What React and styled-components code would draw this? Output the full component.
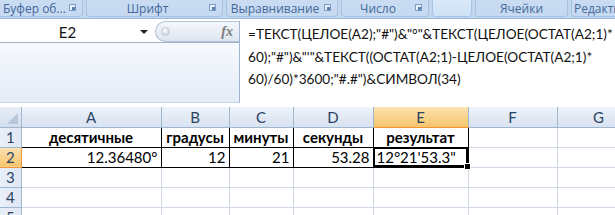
import React from 'react'
import styled, { createGlobalStyle } from 'styled-components'

const GlobalStyle = createGlobalStyle`
    html, body {
        margin: 0;
        padding: 0;
        background: #ffffff;
        overflow: hidden;
    }
    * { box-sizing: border-box; }
`

const Page = styled.div`
    width: 615px;
    height: 215px;
    display: flex;
    flex-direction: column;
    overflow: hidden;
    font-family: Lato, "Open Sans", sans-serif;
`

// ribbon group captions
const Ribbon = styled.div`
    height: 19px;
    display: flex;
    gap: 3px;
    background: #c2d6ee;
    border-bottom: 1px solid #9ab7dc;
    flex-shrink: 0;
    overflow: hidden;
`
const Group = styled.div`
    position: relative;
    width: ${p => p.w}px;
    flex-shrink: 0;
    height: 17px;
    margin-left: ${p => p.ml || 0}px;
    display: flex;
    align-items: center;
    justify-content: ${p => p.pl !== undefined ? 'flex-start' : 'center'};
    padding-left: ${p => p.pl || 0}px;
    padding-right: ${p => p.launcher ? 14 : 0}px;
    background: ${p => p.lit ? 'linear-gradient(#d9e8f9, #cfe1f6)' : 'linear-gradient(#c9dcf2, #c5d9f1)'};
    border: 1px solid #a9c3e3;
    border-top: none;
    border-radius: 0 0 4px 4px;
    font-family: "Open Sans", "Noto Sans", sans-serif;
    font-size: 12px;
    color: #45689a;
    white-space: nowrap;
    overflow: hidden;
`
const Launcher = styled.span`
    position: absolute;
    right: 6px;
    top: 4px;
    width: 7px;
    height: 7px;
    border: 1px solid #7f9cc6;
    background: #e9f1fb;
    &::after {
        content: '';
        position: absolute;
        right: 0;
        bottom: 0;
        width: 3px;
        height: 3px;
        background: #5d7fb0;
    }
`

// formula bar
const FormulaBar = styled.div`
    height: 82px;
    display: flex;
    flex-shrink: 0;
    margin-top: 2px;
`
const LeftPane = styled.div`
    width: 240px;
    flex-shrink: 0;
    display: flex;
    flex-direction: column;
    background: linear-gradient(#ffffff, #f3f7fc 40%, #e3ebf6);
    border-right: 1px solid #9fb3cc;
    border-bottom: 1px solid #c9d6e6;
`
const NameRow = styled.div`
    height: 22px;
    display: flex;
    border-bottom: 1px solid #9fb3cc;
    background: #ffffff;
`
const NameBox = styled.div`
    width: 155px;
    flex-shrink: 0;
    position: relative;
    display: flex;
    align-items: center;
    justify-content: center;
    padding-right: 20px;
    font-size: 15px;
    color: #111;
`
const DropArrow = styled.span`
    position: absolute;
    right: 7px;
    top: 9px;
    width: 0;
    height: 0;
    border-left: 4px solid transparent;
    border-right: 4px solid transparent;
    border-top: 4px solid #222;
`
const FxButton = styled.div`
    flex: 1;
    display: flex;
    align-items: center;
    justify-content: space-between;
    padding: 0 6px 0 5px;
    border: 1px solid #b3c3d8;
    border-right: none;
    border-radius: 11px 0 0 11px;
    background: linear-gradient(#f4f7fb, #dde5ef);
`
const Knob = styled.span`
    width: 9px;
    height: 9px;
    border-radius: 50%;
    background: radial-gradient(circle at 40% 35%, #ffffff, #b8c2cd);
    border: 1px solid #c5ccd5;
`
const Fx = styled.span`
    font-family: "Liberation Serif", serif;
    font-style: italic;
    font-weight: bold;
    font-size: 14px;
    color: #7c7c7c;
`
const FormulaText = styled.div`
    flex: 1;
    min-width: 0;
    overflow: hidden;
    padding: 2px 0 0 8px;
    background: #ffffff;
    font-size: 13.6px;
    line-height: 22.5px;
    color: #111;
    white-space: nowrap;
`

// sheet
const Sheet = styled.table`
    margin-top: 4px;
    flex-shrink: 0;
    border-collapse: collapse;
    table-layout: fixed;
    width: 640px;
`
const Row = styled.tr`
    height: 20px;
`
const Corner = styled.th`
    padding: 0;
    position: relative;
    background: linear-gradient(#e6edf7, #d4dfee);
    border-right: 1px solid #9eb6ce;
    border-bottom: 1px solid #9eb6ce;
    &::after {
        content: '';
        position: absolute;
        right: 3px;
        bottom: 3px;
        width: 0;
        height: 0;
        border-left: 11px solid transparent;
        border-bottom: 11px solid #b7c7da;
    }
`
const ColHead = styled.th`
    padding: 0;
    font-weight: normal;
    font-size: 15px;
    line-height: 18px;
    color: #2a4264;
    background: ${p => p.active
        ? 'linear-gradient(#fbe2b2, #f8d38d 50%, #f5c56b)'
        : 'linear-gradient(#eef3fa, #e2e9f4 50%, #d9e3f1)'};
    border-right: 1px solid #9eb6ce;
    border-bottom: 1px solid ${p => p.active ? '#f29436' : '#9eb6ce'};
`
const RowHead = styled.th`
    padding: 0;
    font-weight: normal;
    font-size: 15px;
    line-height: 18px;
    color: #2a4264;
    background: ${p => p.active
        ? 'linear-gradient(#fbe2b2, #f5c56b)'
        : 'linear-gradient(90deg, #e9eff8, #dfe7f3)'};
    border-right: 1px solid ${p => p.active ? '#f29436' : '#9eb6ce'};
    border-bottom: 1px solid ${p => p.active ? '#f29436' : '#9eb6ce'};
`
const Cell = styled.td`
    padding: 0 3px;
    font-size: 15px;
    line-height: 18px;
    color: #000;
    font-weight: ${p => p.bold ? 'bold' : 'normal'};
    text-align: ${p => p.align || 'left'};
    white-space: nowrap;
    overflow: visible;
    border: 1px solid ${p => p.framed ? '#000' : '#d0d7e5'};
    border-top-color: ${p => p.framed && !p.first ? '#000' : '#9eb6ce'};
`
const SelectedCell = styled(Cell)`
    position: relative;
    outline: 2px solid #000;
    outline-offset: -2px;
    &::after {
        content: '';
        position: absolute;
        right: -3px;
        bottom: -3px;
        width: 5px;
        height: 5px;
        background: #000;
        border: 1px solid #fff;
    }
`

const cols = [
    { key: 'A', w: 140 },
    { key: 'B', w: 68 },
    { key: 'C', w: 64 },
    { key: 'D', w: 80 },
    { key: 'E', w: 95 },
    { key: 'F', w: 89 },
    { key: 'G', w: 83 },
]

const formula = [
    '=ТЕКСТ(ЦЕЛОЕ(A2);"#")&"°"&ТЕКСТ(ЦЕЛОЕ(ОСТАТ(A2;1)*',
    '60);"#")&"\'"&ТЕКСТ((ОСТАТ(A2;1)-ЦЕЛОЕ(ОСТАТ(A2;1)*',
    '60)/60)*3600;"#.#")&СИМВОЛ(34)',
]

const App = () => {
    return (
        <Page>
            <GlobalStyle />
            <Ribbon>
                <Group w={86} ml={-3} pl={5} launcher>Буфер об...<Launcher /></Group>
                <Group w={137} launcher>Шрифт<Launcher /></Group>
                <Group w={112} launcher>Выравнивание<Launcher /></Group>
                <Group w={88} launcher>Число<Launcher /></Group>
                <Group w={40} lit />
                <Group w={93}>Ячейки</Group>
                <Group w={50} pl={2}>Редакти</Group>
            </Ribbon>
            <FormulaBar>
                <LeftPane>
                    <NameRow>
                        <NameBox>E2<DropArrow /></NameBox>
                        <FxButton><Knob /><Fx>fx</Fx></FxButton>
                    </NameRow>
                </LeftPane>
                <FormulaText>
                    {formula.map(line => <div key={line}>{line}</div>)}
                </FormulaText>
            </FormulaBar>
            <Sheet>
                <colgroup>
                    <col style={{width: 21}} />
                    {cols.map(c => <col key={c.key} style={{width: c.w}} />)}
                </colgroup>
                <thead>
                    <Row>
                        <Corner />
                        {cols.map(c => <ColHead key={c.key} active={c.key === 'E'}>{c.key}</ColHead>)}
                    </Row>
                </thead>
                <tbody>
                    <Row>
                        <RowHead>1</RowHead>
                        <Cell framed first bold align="center">десятичные</Cell>
                        <Cell framed first bold align="center">градусы</Cell>
                        <Cell framed first bold align="center">минуты</Cell>
                        <Cell framed first bold align="center">секунды</Cell>
                        <Cell framed first bold align="center">результат</Cell>
                        <Cell />
                        <Cell />
                    </Row>
                    <Row>
                        <RowHead active>2</RowHead>
                        <Cell framed align="right">12.36480°</Cell>
                        <Cell framed align="right">12</Cell>
                        <Cell framed align="right">21</Cell>
                        <Cell framed align="right">53.28</Cell>
                        <SelectedCell framed>12°21'53.3"</SelectedCell>
                        <Cell />
                        <Cell />
                    </Row>
                    {[3, 4, 5].map(r => (
                        <Row key={r}>
                            <RowHead>{r}</RowHead>
                            {cols.map(c => <Cell key={c.key} />)}
                        </Row>
                    ))}
                </tbody>
            </Sheet>
        </Page>
    )
}

export default App
